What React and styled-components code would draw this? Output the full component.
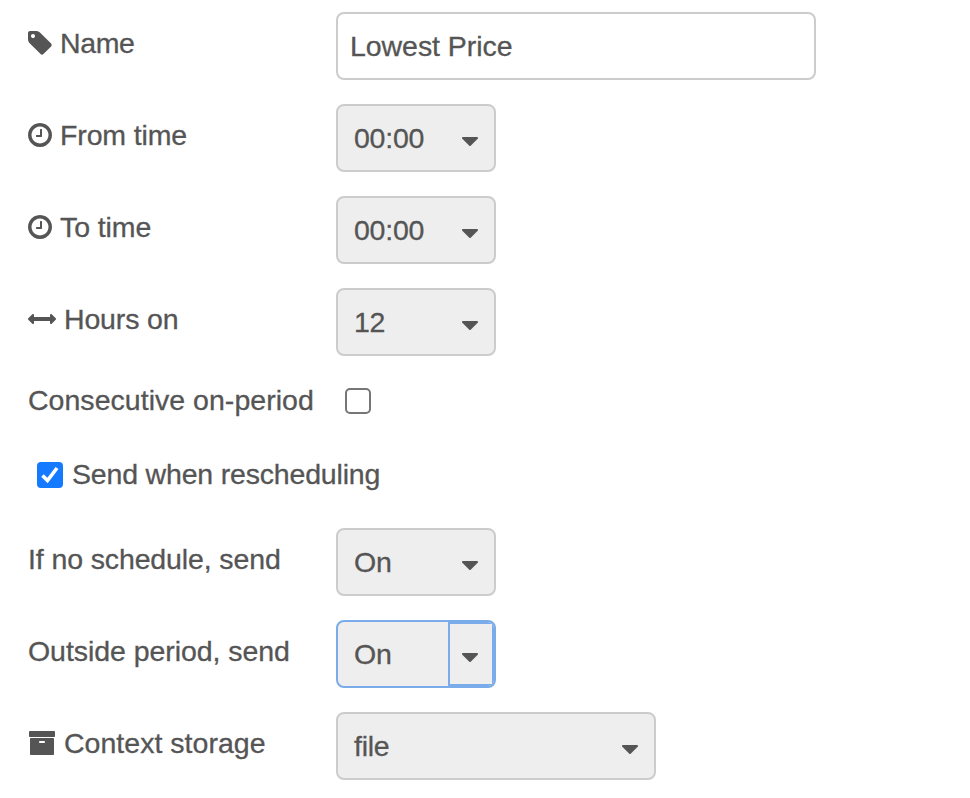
import React from "react";
import styled, { createGlobalStyle } from "styled-components";

const GlobalStyle = createGlobalStyle`
  *, *::before, *::after { box-sizing: border-box; }
  body { margin: 0; background: #fff; }
`;

const Form = styled.form`
  width: 970px;
  height: 798px;
  padding: 12px 28px 0;
  overflow: hidden;
  color: #555;
  font-family: "Liberation Sans", Arial, sans-serif;
  font-size: 28.5px;
  line-height: 40px;
  -webkit-text-stroke: 0.3px #555;
`;

const Row = styled.div`
  display: flex;
  align-items: flex-start;
  height: 68px;
  margin-bottom: 24px;
`;

const CheckRow = styled.div`
  display: flex;
  align-items: center;
  height: 40px;
  margin-top: ${(p) => p.$top}px;
  margin-bottom: ${(p) => p.$bottom}px;
  padding-left: ${(p) => p.$indent || 0}px;
`;

const Label = styled.label`
  display: flex;
  align-items: center;
  flex: none;
  gap: ${(p) => p.$gap || 8}px;
  width: ${(p) => p.$width || 308}px;
  height: 40px;
  margin-top: ${(p) => (p.$inline ? 0 : 11)}px;
  white-space: nowrap;
`;

const Text = styled.span`
  padding-bottom: ${(p) => p.$lift || 0}px;
  letter-spacing: ${(p) => p.$track ?? -0.24}px;
  white-space: nowrap;
`;

const Glyph = styled.svg`
  display: block;
  flex: none;
  width: ${(p) => p.$w}px;
  height: 28px;
  fill: currentColor;
`;

const Input = styled.input`
  width: 480px;
  height: 68px;
  padding: 0 12px;
  border: 2px solid #ccc;
  border-radius: 8px;
  background: #fff;
  color: #555;
  font: inherit;
  letter-spacing: ${(p) => p.$track || 0}px;
  outline: none;
`;

const Select = styled.div`
  display: flex;
  width: ${(p) => p.$width || 160}px;
  height: 68px;
  border: 2px solid ${(p) => (p.$focus ? "#79ace9" : "#ccc")};
  border-radius: 8px;
  background: #eee;
  overflow: hidden;
`;

const Value = styled.div`
  flex: 1;
  padding: 12px 0 0 16px;
`;

const Trigger = styled.div`
  display: flex;
  width: 46px;
  padding: 19px 0 0 6px;
  border: 2px solid ${(p) => (p.$focus ? "#79ace9" : "transparent")};
`;

const Box = styled.span`
  display: flex;
  flex: none;
  width: 26px;
  height: 26px;
  border: 2px solid ${(p) => (p.$on ? "#147aff" : "#767676")};
  border-radius: ${(p) => (p.$on ? 4 : 5)}px;
  background: ${(p) => (p.$on ? "#147aff" : "#fff")};
`;

const Tick = styled.svg`
  width: 22px;
  height: 22px;
  fill: none;
  stroke: #fff;
  stroke-width: 3.6;
`;

const ICONS = {
  tag: {
    w: 24,
    box: "128 0 1536 1792",
    d: "M576 448q0-53-37.5-90.5t-90.5-37.5-90.5 37.5-37.5 90.5 37.5 90.5 90.5 37.5 90.5-37.5 37.5-90.5zm1067 576q0 53-37 90l-491 492q-39 37-91 37-53 0-90-37l-715-716q-38-37-64.5-101t-26.5-117v-416q0-52 38-90t90-38h416q53 0 117 26.5t102 64.5l715 714q37 39 37 91z",
  },
  clock: {
    w: 24,
    box: "128 0 1536 1792",
    d: "M1024 544v448q0 14-9 23t-23 9h-320q-14 0-23-9t-9-23v-64q0-14 9-23t23-9h224v-352q0-14 9-23t23-9h64q14 0 23 9t9 23zm416 352q0-148-73-273t-198-198-273-73-273 73-198 198-73 273 73 273 198 198 273 73 273-73 198-198 73-273zm224 0q0 209-103 385.5t-279.5 279.5-385.5 103-385.5-103-279.5-279.5-103-385.5 103-385.5 279.5-279.5 385.5-103 385.5 103 279.5 279.5 103 385.5z",
  },
  arrows: {
    w: 28,
    box: "0 0 1792 1792",
    d: "M1792 896q0 26-19 45l-256 256q-19 19-45 19t-45-19-19-45v-128h-1024v128q0 26-19 45t-45 19-45-19l-256-256q-19-19-19-45t19-45l256-256q19-19 45-19t45 19 19 45v128h1024v-128q0-26 19-45t45-19 45 19l256 256q19 19 19 45z",
  },
  archive: {
    w: 28,
    box: "0 0 1792 1792",
    d: "M1088 832q0-26-19-45t-45-19h-256q-26 0-45 19t-19 45 19 45 45 19h256q26 0 45-19t19-45zm576-192v960q0 26-19 45t-45 19h-1408q-26 0-45-19t-19-45v-960q0-26 19-45t45-19h1408q26 0 45 19t19 45zm64-448v256q0 26-19 45t-45 19h-1536q-26 0-45-19t-19-45v-256q0-26 19-45t45-19h1536q26 0 45 19t19 45z",
  },
  caret: {
    w: 28,
    box: "0 0 1792 1792",
    d: "M1408 704q0 26-19 45l-448 448q-19 19-45 19t-45-19l-448-448q-19-19-19-45t19-45 45-19h896q26 0 45 19t19 45z",
  },
};

function Icon({ name }) {
  const { w, box, d } = ICONS[name];
  return (
    <Glyph $w={w} viewBox={box} aria-hidden="true">
      <path d={d} />
    </Glyph>
  );
}

function SelectRow({ icon, label, track, value, width, focus }) {
  return (
    <Row>
      <Label>
        {icon && <Icon name={icon} />}
        <Text $track={track}>{label}</Text>
      </Label>
      <Select $width={width} $focus={focus}>
        <Value>
          <Text>{value}</Text>
        </Value>
        <Trigger $focus={focus}>
          <Icon name="caret" />
        </Trigger>
      </Select>
    </Row>
  );
}

export default function App() {
  return (
    <>
      <GlobalStyle />
      <Form>
        <Row>
          <Label>
            <Icon name="tag" />
            <Text $track={-0.4}>Name</Text>
          </Label>
          <Input defaultValue="Lowest Price" $track={-0.06} />
        </Row>
        <SelectRow icon="clock" label="From time" track={-0.13} value="00:00" />
        <SelectRow icon="clock" label="To time" track={-0.1} value="00:00" />
        <SelectRow icon="arrows" label="Hours on" track={-0.16} value="12" />
        <CheckRow $top={25} $bottom={34}>
          <Label $inline $width={317}>
            <Text $track={0.03} $lift={2}>Consecutive on-period</Text>
          </Label>
          <Box />
        </CheckRow>
        <CheckRow $top={0} $bottom={33} $indent={9}>
          <Label $inline $gap={9}>
            <Box $on>
              <Tick viewBox="0 0 22 22">
                <path d="M3.5 11.5 8.5 16.5 18 4" />
              </Tick>
            </Box>
            <Text $track={-0.18} $lift={2}>Send when rescheduling</Text>
          </Label>
        </CheckRow>
        <SelectRow label="If no schedule, send" track={-0.12} value="On" />
        <SelectRow label="Outside period, send" track={-0.06} value="On" focus />
        <SelectRow icon="archive" label="Context storage" track={0.02} value="file" width={320} />
      </Form>
    </>
  );
}
